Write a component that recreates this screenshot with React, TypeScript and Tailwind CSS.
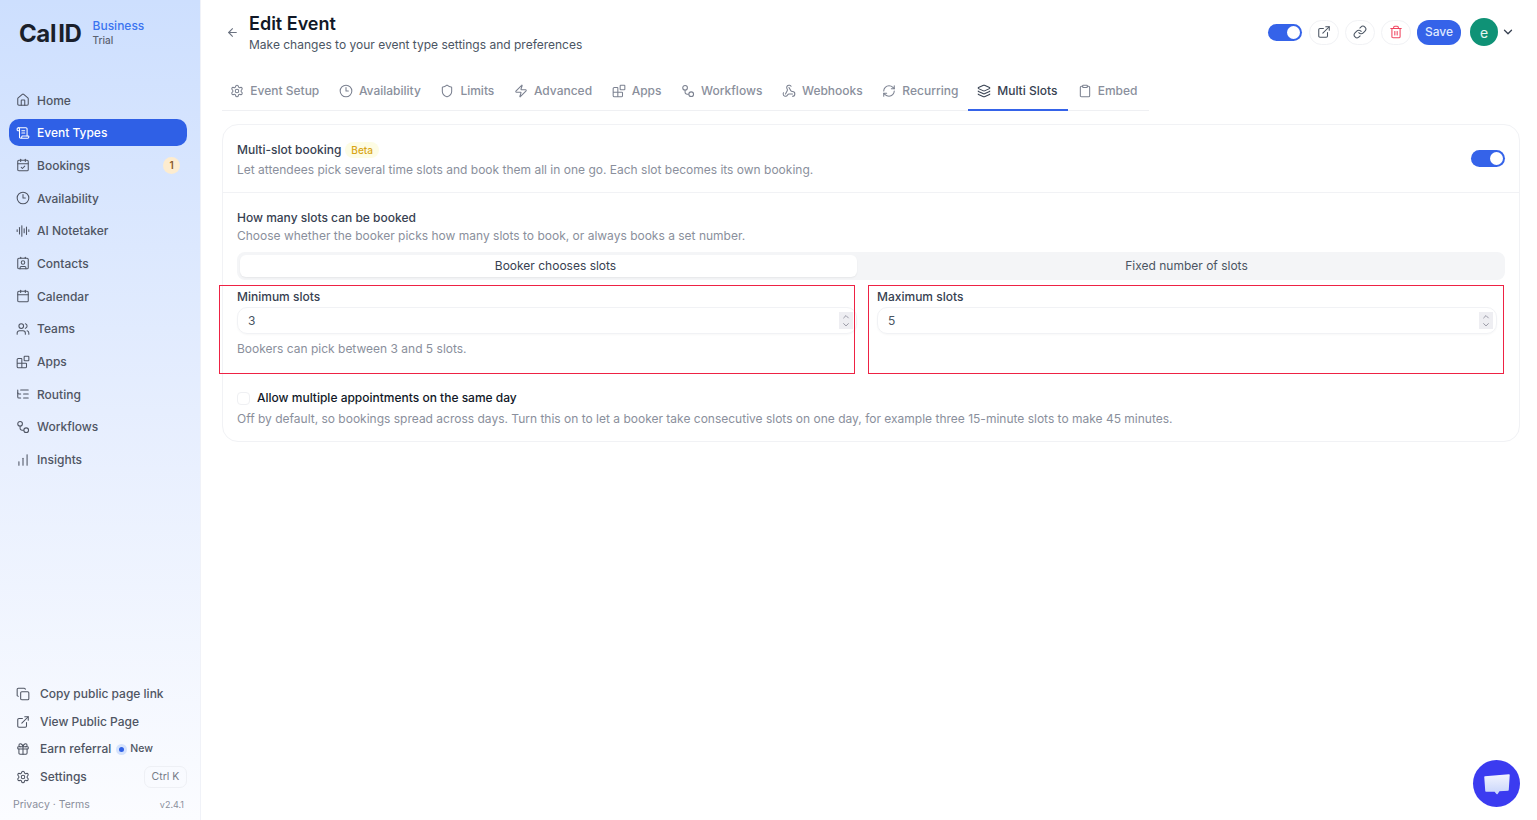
import React from 'react';
import {
  ArrowLeft,
  AudioLines,
  Blocks,
  Calendar,
  CalendarCheck,
  ChartNoAxesColumnIncreasing,
  ChevronDown,
  ChevronUp,
  Clipboard,
  Clock3,
  Contact,
  Copy,
  ExternalLink,
  Gift,
  House,
  Layers,
  Link,
  ListTree,
  RefreshCw,
  ScrollText,
  Settings,
  Shield,
  Trash2,
  Users,
  Webhook,
  Zap,
} from 'lucide-react';

// Two linked nodes, lucide has no exact match for this one
function WorkflowIcon({ className, strokeWidth }: { className?: string; strokeWidth?: number }) {
  return (
    <svg viewBox="0 0 24 24" fill="none" stroke="currentColor" strokeWidth={strokeWidth} className={className}>
      <circle cx="7" cy="6.5" r="4" />
      <circle cx="17.5" cy="17.5" r="4" />
      <path d="M7 10.5V14a3.5 3.5 0 0 0 3.5 3.5h3" />
    </svg>
  );
}

// ── Sidebar navigation ────────────────────────────────────────────────────────
const NAV = [
  { label: 'Home', icon: House },
  { label: 'Event Types', icon: ScrollText, active: true },
  { label: 'Bookings', icon: CalendarCheck, badge: '1' },
  { label: 'Availability', icon: Clock3 },
  { label: 'AI Notetaker', icon: AudioLines },
  { label: 'Contacts', icon: Contact },
  { label: 'Calendar', icon: Calendar },
  { label: 'Teams', icon: Users },
  { label: 'Apps', icon: Blocks },
  { label: 'Routing', icon: ListTree },
  { label: 'Workflows', icon: WorkflowIcon },
  { label: 'Insights', icon: ChartNoAxesColumnIncreasing },
];

const TABS = [
  { label: 'Event Setup', icon: Settings },
  { label: 'Availability', icon: Clock3 },
  { label: 'Limits', icon: Shield },
  { label: 'Advanced', icon: Zap },
  { label: 'Apps', icon: Blocks },
  { label: 'Workflows', icon: WorkflowIcon },
  { label: 'Webhooks', icon: Webhook },
  { label: 'Recurring', icon: RefreshCw },
  { label: 'Multi Slots', icon: Layers, active: true },
  { label: 'Embed', icon: Clipboard },
];

function Toggle() {
  return (
    <div className="flex h-[17px] w-[34px] items-center justify-end rounded-full bg-[#3563e9] pr-[2px]">
      <div className="h-[13px] w-[13px] rounded-full bg-white" />
    </div>
  );
}

function SlotField({
  label,
  value,
  hint,
  frame,
}: {
  label: string;
  value: string;
  hint?: string;
  frame: string;
}) {
  return (
    <div className="relative h-[89px] pt-[5px]">
      <div className="h-[14px] text-[12px] leading-[14px] font-medium text-[#374151]">{label}</div>
      <div className="mt-[3px] flex h-[27px] items-center justify-between rounded-[10px] border border-[#f1f2f5] pr-[3px] pl-[10px] text-[12px] text-[#4b5563] shadow-[0_1px_2px_rgba(0,0,0,0.03)]">
        <span>{value}</span>
        <div className="flex h-[17px] w-[14px] flex-col items-center justify-center bg-[#eeeef2] text-[#8b8b98]">
          <ChevronUp className="-mb-[1px] h-[10px] w-[10px]" strokeWidth={2.2} />
          <ChevronDown className="-mt-[1px] h-[10px] w-[10px]" strokeWidth={2.2} />
        </div>
      </div>
      {hint && <p className="mt-[7px] text-[12px] leading-[16px] text-[#8a8f9c]">{hint}</p>}
      {/* Red annotation frame drawn over the field */}
      <div className={frame} />
    </div>
  );
}

export default function App() {
  return (
    <div className="flex h-[820px] w-[1537px] overflow-hidden bg-white font-['Inter',sans-serif]">
      {/* ── Sidebar ──────────────────────────────────────────────────────────── */}
      <aside className="flex w-[201px] shrink-0 flex-col border-r border-[#f0f2f8] bg-gradient-to-b from-[#cddffe] via-[#e6eefe] to-[#fbfcff] pr-[13px] pl-[9px]">
        <div className="flex h-[84px] items-start pt-[19px] pl-[10px]">
          <span className="text-[24px] leading-[29px] font-bold tracking-[-0.4px] text-[#1a1f2b] [word-spacing:-3px]">
            Cal ID
          </span>
          <div className="ml-[11px] flex flex-col">
            <span className="text-[12px] leading-[14px] font-medium text-[#3b74f0]">Business</span>
            <span className="text-[10px] leading-[14px] font-medium text-[#5b6270]">Trial</span>
          </div>
        </div>

        <nav className="flex flex-col gap-[5.7px] pt-[2.5px]">
          {NAV.map(({ label, icon: Icon, active, badge }) => (
            <div
              key={label}
              className={
                active
                  ? 'flex h-[27px] items-center gap-[7px] rounded-[10px] bg-[#2f60e6] pl-[7px] text-[12px] font-medium text-white'
                  : 'flex h-[27px] items-center gap-[7px] pr-[7px] pl-[7px] text-[12px] font-medium text-[#4f5563]'
              }
            >
              <Icon className="h-[14px] w-[14px]" strokeWidth={1.8} />
              <span className="pt-[1px]">{label}</span>
              {badge && (
                <span className="ml-auto flex h-[17px] w-[17px] items-center justify-center rounded-full bg-[#fdeccf] text-[10px] font-semibold text-[#8a5a2b]">
                  {badge}
                </span>
              )}
            </div>
          ))}
        </nav>

        <div className="mt-auto flex flex-col pb-[7px]">
          <div className="flex h-[27.4px] items-center gap-[10px] pl-[7px] text-[12px] font-medium text-[#4f5563]">
            <Copy className="h-[14px] w-[14px]" strokeWidth={1.8} />
            Copy public page link
          </div>
          <div className="flex h-[27.4px] items-center gap-[10px] pl-[7px] text-[12px] font-medium text-[#4f5563]">
            <ExternalLink className="h-[14px] w-[14px]" strokeWidth={1.8} />
            View Public Page
          </div>
          <div className="flex h-[27.4px] items-center gap-[10px] pl-[7px] text-[12px] font-medium text-[#4f5563]">
            <Gift className="h-[14px] w-[14px]" strokeWidth={1.8} />
            <span>Earn referral</span>
            <span className="-ml-[5px] flex items-center gap-[3px] text-[10.5px] text-[#4f5563]">
              <span className="h-[11px] w-[11px] rounded-full border-[3px] border-[#d5e2fc] bg-[#2f60e6]" />
              New
            </span>
          </div>
          <div className="flex h-[27.4px] items-center gap-[10px] pl-[7px] text-[12px] font-medium text-[#4f5563]">
            <Settings className="h-[14px] w-[14px]" strokeWidth={1.8} />
            Settings
            <span className="ml-auto flex h-[22px] w-[43px] items-center justify-center rounded-[7px] border border-[#eef0f5] text-[10.5px] font-normal text-[#767c88]">
              Ctrl K
            </span>
          </div>
          <div className="mt-[7px] flex items-center justify-between pr-[3px] pl-[4px] text-[10.5px] text-[#8a8f9c]">
            <span>Privacy · Terms</span>
            <span className="text-[9px]">v2.4.1</span>
          </div>
        </div>
      </aside>

      {/* ── Main ─────────────────────────────────────────────────────────────── */}
      <main className="relative flex-1 pr-[17px] pl-[21px]">
        <header className="flex h-[65px] items-center justify-between pb-[1px]">
          <div className="flex items-center">
            <ArrowLeft className="mr-[10px] ml-[4px] h-[13px] w-[13px] text-[#6b7280]" strokeWidth={2} />
            <div className="mt-[4px] flex flex-col">
              <h1 className="text-[18px] leading-[22px] font-semibold text-[#111827]">Edit Event</h1>
              <p className="text-[12px] leading-[20px] text-[#4b5563]">
                Make changes to your event type settings and preferences
              </p>
            </div>
          </div>
          <div className="flex items-center">
            <Toggle />
            <div className="ml-[7px] flex h-[25px] w-[30px] items-center justify-center rounded-full border border-[#f1f2f5] text-[#4b5563]">
              <ExternalLink className="h-[14px] w-[14px]" strokeWidth={1.8} />
            </div>
            <div className="ml-[6px] flex h-[25px] w-[30px] items-center justify-center rounded-full border border-[#f1f2f5] text-[#4b5563]">
              <Link className="h-[14px] w-[14px]" strokeWidth={1.8} />
            </div>
            <div className="ml-[6px] flex h-[25px] w-[30px] items-center justify-center rounded-full border border-[#f1f2f5] text-[#f0435f]">
              <Trash2 className="h-[14px] w-[14px]" strokeWidth={1.8} />
            </div>
            <div className="ml-[6px] flex h-[25px] w-[44px] items-center justify-center rounded-[12px] bg-[#3563e9] text-[12px] font-medium text-[#dfe8ff]">
              Save
            </div>
            <div className="ml-[9px] flex h-[28px] w-[28px] items-center justify-center rounded-full bg-[#0f9276] text-[14px] text-[#e6f5f1]">
              e
            </div>
            <ChevronDown className="mr-[5px] ml-[3px] h-[14px] w-[14px] text-[#374151]" strokeWidth={2.2} />
          </div>
        </header>

        <div className="flex h-[46px] w-[927px] items-stretch border-b border-[#eff0f3]">
          {TABS.map(({ label, icon: Icon, active }) => (
            <div
              key={label}
              className={
                active
                  ? '-mb-px flex items-center gap-[6px] border-b-2 border-[#3563e9] pt-[7px] pr-[10.5px] pl-[9px] text-[12px] font-medium whitespace-nowrap text-[#374151]'
                  : 'flex items-center gap-[6px] px-[9.8px] pt-[6px] text-[12px] font-medium whitespace-nowrap text-[#8a8f9c] first:-ml-[1.5px]'
              }
            >
              <Icon
                className={active ? 'h-[14px] w-[14px] text-[#374151]' : 'h-[14px] w-[14px] text-[#7b8190]'}
                strokeWidth={1.8}
              />
              {label}
            </div>
          ))}
        </div>

        {/* ── Multi-slot card ──────────────────────────────────────────────── */}
        <section className="mt-[13px] h-[318px] rounded-[16px] border border-[#f1f2f5]">
          <div className="flex h-[68px] items-center justify-between border-b border-[#f1f2f5] pr-[14px] pl-[14px]">
            <div className="mt-[3px]">
              <div className="flex items-center gap-[4px]">
                <span className="text-[12px] leading-[18px] font-medium text-[#374151]">Multi-slot booking</span>
                <span className="rounded-full bg-[#fdfce4] px-[6px] text-[10px] leading-[16px] font-medium text-[#d9a514]">
                  Beta
                </span>
              </div>
              <p className="mt-[2px] text-[12px] leading-[18px] text-[#8a8f9c]">
                Let attendees pick several time slots and book them all in one go. Each slot becomes its own booking.
              </p>
            </div>
            <Toggle />
          </div>

          <div className="px-[14px] pt-[17px]">
            <div className="text-[12px] leading-[16px] font-medium text-[#374151]">How many slots can be booked</div>
            <p className="mt-[1px] text-[12px] leading-[17px] text-[#8a8f9c]">
              Choose whether the booker picks how many slots to book, or always books a set number.
            </p>
            <div className="mt-[8px] grid h-[28px] grid-cols-2 rounded-[8px] bg-[#f4f5f7] p-[3px] text-[12px] text-[#374151]">
              <div className="mr-[14px] flex items-center justify-center rounded-[6px] bg-white pl-[14px] shadow-[0_1px_2px_rgba(0,0,0,0.06)]">
                Booker chooses slots
              </div>
              <div className="flex items-center justify-center text-[#4b5563]">Fixed number of slots</div>
            </div>

            <div className="mt-[5px] grid grid-cols-2 gap-x-[20px] pr-[8px]">
              <SlotField
                label="Minimum slots"
                value="3"
                hint="Bookers can pick between 3 and 5 slots."
                frame="pointer-events-none absolute inset-y-0 -left-[18px] right-[2px] border border-[#ee2244]"
              />
              <SlotField
                label="Maximum slots"
                value="5"
                frame="pointer-events-none absolute inset-y-0 -left-[9px] -right-[7px] border border-[#ee2244]"
              />
            </div>

            <div className="mt-[16px] flex items-center gap-[7px]">
              <div className="h-[13px] w-[13px] rounded-[4px] border border-[#eff0f3]" />
              <span className="text-[12px] leading-[16px] font-medium text-[#111827]">
                Allow multiple appointments on the same day
              </span>
            </div>
            <p className="mt-[4px] text-[12px] leading-[18px] text-[#8a8f9c]">
              Off by default, so bookings spread across days. Turn this on to let a booker take consecutive slots on one
              day, for example three 15-minute slots to make 45 minutes.
            </p>
          </div>
        </section>

        {/* Floating chat button */}
        <div className="absolute right-[17px] bottom-[13px] flex h-[47px] w-[47px] items-center justify-center rounded-full bg-[#3b3bf0]">
          <svg width="28" height="26" viewBox="0 0 28 26">
            <defs>
              <linearGradient id="chat" x1="0" y1="0" x2="0" y2="1">
                <stop offset="0" stopColor="#f1f3fe" />
                <stop offset="1" stopColor="#c9d6fb" />
              </linearGradient>
            </defs>
            <path
              d="M2 6 L26 4 L25 19 L16 19.5 L14 22.5 L12 20 L3 20 Z"
              fill="url(#chat)"
              stroke="url(#chat)"
              strokeWidth="1.5"
              strokeLinejoin="round"
            />
          </svg>
        </div>
      </main>
    </div>
  );
}
